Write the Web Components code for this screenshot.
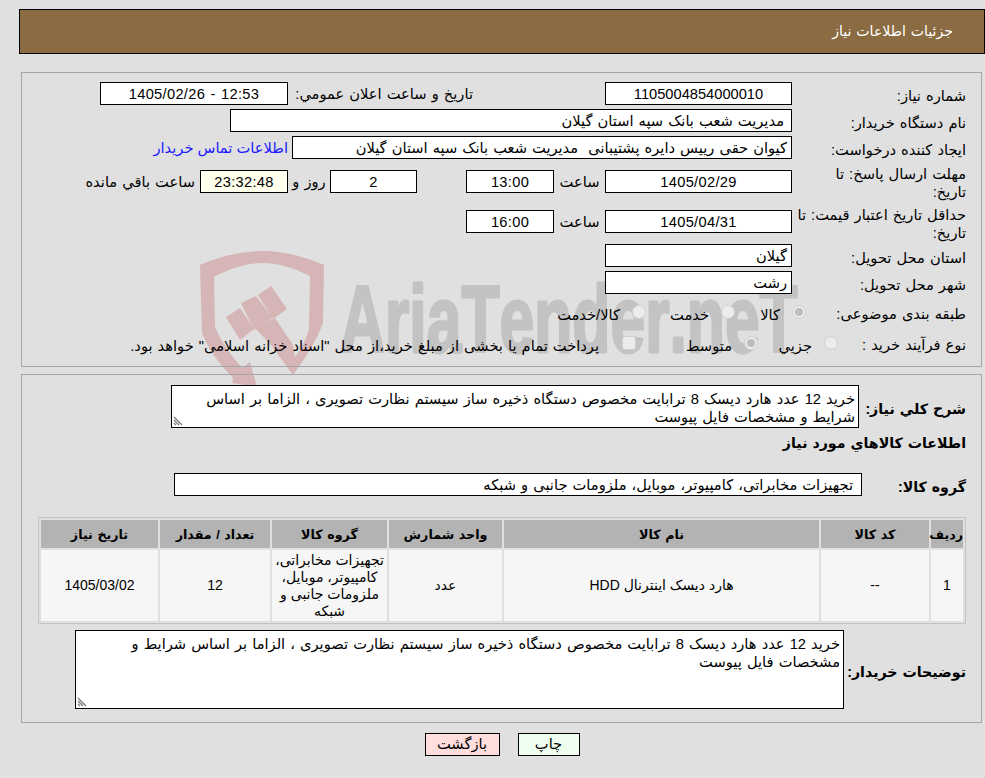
<!DOCTYPE html>
<html lang="fa" dir="rtl">
<head>
<meta charset="utf-8">
<title>جزئیات اطلاعات نیاز</title>
<style>
  html, body { margin: 0; padding: 0; background: #e0e0e0; }
  body { font: 14.67px "Liberation Sans", "DejaVu Sans", sans-serif; word-spacing: 1px; color: #000; width: 985px; height: 778px; overflow: hidden; }
</style>
</head>
<body>
<need-details></need-details>

<script>
class FieldBox extends HTMLElement {
  constructor() {
    super();
    this.attachShadow({ mode: 'open' });
    this.shadowRoot.innerHTML = `
      <style>
        :host {
          display: block;
          flex: none;
          box-sizing: border-box;
          height: 23px;
          line-height: 22px;
          border: 1px solid #000;
          background: #fff;
          padding: 0 4px;
          white-space: nowrap;
          overflow: hidden;
        }
        :host([center]) { text-align: center; letter-spacing: .3px; }
        :host([clock]) { background: #ffffee; }
      </style>
      <slot></slot>
    `;
  }
}
customElements.define('field-box', FieldBox);

class NoteBox extends HTMLElement {
  constructor() {
    super();
    this.attachShadow({ mode: 'open' });
    this.shadowRoot.innerHTML = `
      <style>
        :host {
          display: block;
          position: relative;
          flex: none;
          box-sizing: border-box;
          border: 1px solid #000;
          background: #fff;
          padding: 4px 3px 0;
          line-height: 18px;
        }
        svg { position: absolute; left: 1px; bottom: 1px; }
      </style>
      <slot></slot>
      <svg width="10" height="10" viewBox="0 0 10 10" fill="none" stroke="#777" stroke-width="1.2">
        <path d="M1 1 9 9M1 4 6 9M1 7 3 9"/>
      </svg>
    `;
  }
}
customElements.define('note-box', NoteBox);

// one label + whatever follows it, label column set with --label
class InfoRow extends HTMLElement {
  constructor() {
    super();
    this.attachShadow({ mode: 'open' });
    this.shadowRoot.innerHTML = `
      <style>
        :host {
          display: grid;
          grid-template-columns: var(--label, 174px) 1fr;
          align-items: center;
          min-height: var(--h, 23px);
        }
        :host([strong]) .lab { font-weight: 700; font-size: 14.2px; }
        .lab { line-height: 18px; white-space: pre-line; padding-top: 2px; margin-bottom: -2px; }
        .body { display: flex; align-items: center; min-width: 0; }
      </style>
      <div class="lab"></div>
      <div class="body"><slot></slot></div>
    `;
    this.shadowRoot.querySelector('.lab').textContent = this.getAttribute('label');
  }
}
customElements.define('info-row', InfoRow);

class RadioOption extends HTMLElement {
  constructor() {
    super();
    this.attachShadow({ mode: 'open' });
    this.shadowRoot.innerHTML = `
      <style>
        :host { display: flex; align-items: center; flex: none; gap: 12px; white-space: nowrap; }
        i {
          display: block;
          position: relative;
          flex: none;
          box-sizing: border-box;
          width: 14px;
          height: 14px;
          border-radius: 50%;
          border: 1px solid #cfcfcf;
          background: #ececec;
        }
        :host([on]) i::after {
          content: '';
          position: absolute;
          inset: 2px;
          border-radius: 50%;
          background: #bdbdbd;
        }
        :host([square]) i { border-radius: 3px; }
        span { position: relative; top: 3px; }
      </style>
      <i></i><span><slot></slot></span>
    `;
  }
}
customElements.define('radio-option', RadioOption);

class ItemsTable extends HTMLElement {
  constructor() {
    super();
    this.attachShadow({ mode: 'open' });
    this.shadowRoot.innerHTML = `
      <style>
        :host {
          display: block;
          box-sizing: border-box;
          border: 1px solid #c4c4c4;
          width: 928px;
        }
        table { border-collapse: separate; border-spacing: 2px; table-layout: fixed; width: 926px; }
        th { background: #b3b3b3; height: 28px; padding: 0; font-size: 12.7px; }
        td { background: #f6f6f6; height: 71px; padding: 0; text-align: center; line-height: 17px; box-sizing: border-box; font-size: 14px; word-spacing: 0; }
      </style>
      <table>
        <colgroup>
          <col style="width:32px"><col style="width:108px"><col style="width:315px">
          <col style="width:113px"><col style="width:115px"><col style="width:110px"><col style="width:117px">
        </colgroup>
        <tr><th>رديف</th><th>کد کالا</th><th>نام کالا</th><th>واحد شمارش</th><th>گروه کالا</th><th>تعداد / مقدار</th><th>تاریخ نیاز</th></tr>
        <tr><td>1</td><td>--</td><td>هارد دیسک اینترنال HDD</td><td>عدد</td><td>تجهیزات مخابراتی، کامپیوتر، موبایل، ملزومات جانبی و شبکه</td><td>12</td><td>1405/03/02</td></tr>
      </table>
    `;
  }
}
customElements.define('items-table', ItemsTable);

class ActionButton extends HTMLElement {
  constructor() {
    super();
    this.attachShadow({ mode: 'open' });
    this.shadowRoot.innerHTML = `
      <style>
        :host {
          display: block;
          box-sizing: border-box;
          height: 23px;
          line-height: 21px;
          border: 1px solid #000;
          text-align: center;
          background: #efffef;
          width: 62px;
        }
        :host([back]) { background: #ffdddd; width: 75px; }
      </style>
      <slot></slot>
    `;
  }
}
customElements.define('action-button', ActionButton);

// faded logo behind the form, drawn in page coordinates
class AriaWatermark extends HTMLElement {
  constructor() {
    super();
    this.attachShadow({ mode: 'open' });
    this.shadowRoot.innerHTML = `
      <style>
        :host { position: absolute; left: 195px; top: 245px; width: 620px; height: 150px; z-index: 0; pointer-events: none; }
        svg { display: block; }
        text { font-family: "Liberation Sans", sans-serif; font-weight: 700; font-kerning: none; fill: #c3c3c3; stroke: #c3c3c3; stroke-width: 3; stroke-linejoin: round; direction: ltr; word-spacing: 0; }
      </style>
      <svg width="620" height="150" viewBox="195 245 620 150" dir="ltr">
        <g fill="#d6b5b6">
          <path d="M200 265Q232 251 262 251T324 265L323 323Q315 345 293 375L271 345 255 328 275 318 293 345 295 357Q307 340 309 328L310 276Q285 263 263 263T214 277L215 327Q222 345 242 368L250 362 257 387 232 383 233 378Q210 355 202 333Z"/>
          <path d="M226 317 240 308 254 329 240 340Z"/>
          <path d="M241 303 256 296 273 318 254 330Z"/>
          <path d="M258 295 271 286 287 309 273 319Z"/>
        </g>
        <text transform="translate(340 352) scale(.657 1)" font-size="95">AriaTender.neT</text>
      </svg>
    `;
  }
}
customElements.define('aria-watermark', AriaWatermark);

class NeedDetails extends HTMLElement {
  constructor() {
    super();
    this.attachShadow({ mode: 'open' });
    this.shadowRoot.innerHTML = `
      <style>
        :host { display: block; position: relative; height: 778px; box-sizing: border-box; padding: 9px 0 0 19px; }
        .title {
          height: 45px; box-sizing: border-box; border: 1px solid #000; background: #8b6b41; color: #fff;
          padding: 0 31px; line-height: 43px; font-size: 14.1px;
        }
        .panel {
          position: relative; z-index: 1; box-sizing: border-box; border: 1px solid #a5a5a5;
          margin: 0 3px 0 2px; padding: 9px 15px 0 0; display: flex; flex-direction: column;
        }
        .top { margin-top: 18px; height: 295px; gap: 4px; }
        .needs { margin-top: 7px; height: 349px; padding-top: 10px; }
        .link { color: #1a1aff; margin-right: 4px; white-space: nowrap; word-spacing: 0; }
        .txt { white-space: nowrap; flex: none; }
        .mid { text-align: center; }
        .note { white-space: nowrap; position: relative; top: 3px; margin-right: 11px; }
        h3 { font-size: 14.2px; margin: 6px 0 21px; line-height: 18px; }
        items-table { margin: 21px 0 6px; }
        .actions { position: relative; z-index: 1; display: flex; justify-content: center; gap: 18px; margin-top: 10px; }
      </style>
      <aria-watermark></aria-watermark>
      <div class="title">جزئیات اطلاعات نیاز</div>

      <section class="panel top">
        <info-row label="شماره نیاز:">
          <field-box center style="width:187px;letter-spacing:0">1105004854000010</field-box>
          <span class="txt" style="width:180px;margin-right:132px">تاریخ و ساعت اعلان عمومي:</span>
          <field-box center style="width:188px;margin-right:5px">12:53 - 1405/02/26</field-box>
        </info-row>
        <info-row label="نام دستگاه خریدار:">
          <field-box style="width:562px;padding:0 7px">مدیریت شعب بانک سپه استان گیلان</field-box>
        </info-row>
        <info-row label="ایجاد کننده درخواست:">
          <field-box style="width:500px">کیوان حقی رییس دایره پشتیبانی&nbsp; مدیریت شعب بانک سپه استان گیلان</field-box>
          <span class="link">اطلاعات تماس خریدار</span>
        </info-row>
        <info-row label="مهلت ارسال پاسخ: تا&#10;تاریخ:" style="--h:36px">
          <field-box center style="width:187px">1405/02/29</field-box>
          <span class="txt mid" style="width:51px">ساعت</span>
          <field-box center style="width:88px">13:00</field-box>
          <field-box center style="width:87px;margin-right:49px">2</field-box>
          <span class="txt mid" style="width:42px">روز و</span>
          <field-box center clock style="width:88px">23:32:48</field-box>
          <span class="txt" style="margin-right:5px">ساعت باقي مانده</span>
        </info-row>
        <info-row label="حداقل تاریخ اعتبار قیمت: تا&#10;تاریخ:" style="--h:37px">
          <field-box center style="width:187px">1405/04/31</field-box>
          <span class="txt mid" style="width:51px">ساعت</span>
          <field-box center style="width:88px">16:00</field-box>
        </info-row>
        <info-row label="استان محل تحویل:">
          <field-box style="width:187px">گیلان</field-box>
        </info-row>
        <info-row label="شهر محل تحویل:">
          <field-box style="width:187px">رشت</field-box>
        </info-row>
        <info-row label="طبقه بندی موضوعی:" style="--label:160px;--h:27px">
          <radio-option on style="width:71px">کالا</radio-option>
          <radio-option style="width:89px">خدمت</radio-option>
          <radio-option>کالا/خدمت</radio-option>
        </info-row>
        <info-row label="نوع فرآیند خرید :" style="--label:128px;--h:27px">
          <radio-option style="width:80px">جزيي</radio-option>
          <radio-option on style="width:122px">متوسط</radio-option>
          <radio-option square></radio-option>
          <span class="note">پرداخت تمام یا بخشی از مبلغ خرید،از محل "اسناد خزانه اسلامی" خواهد بود.</span>
        </info-row>
      </section>

      <section class="panel needs">
        <info-row strong label="شرح کلي نیاز:" style="--label:107px">
          <note-box style="width:688px;height:43px">خرید 12 عدد هارد دیسک 8 ترابایت مخصوص دستگاه ذخیره ساز سیستم نظارت تصویری ، الزاما بر اساس<br>شرایط و مشخصات فایل پیوست</note-box>
        </info-row>
        <h3>اطلاعات کالاهاي مورد نیاز</h3>
        <info-row strong label="گروه کالا:" style="--label:104px">
          <field-box style="width:688px;padding:0 8px">تجهیزات مخابراتی، کامپیوتر، موبایل، ملزومات جانبی و شبکه</field-box>
        </info-row>
        <items-table></items-table>
        <info-row strong label="توضیحات خریدار:" style="--label:122px">
          <note-box style="width:769px;height:79px">خرید 12 عدد هارد دیسک 8 ترابایت مخصوص دستگاه ذخیره ساز سیستم نظارت تصویری ، الزاما بر اساس شرایط و<br>مشخصات فایل پیوست</note-box>
        </info-row>
      </section>

      <div class="actions">
        <action-button>چاپ</action-button>
        <action-button back>بازگشت</action-button>
      </div>
    `;
  }
}
customElements.define('need-details', NeedDetails);
</script>
</body>
</html>
